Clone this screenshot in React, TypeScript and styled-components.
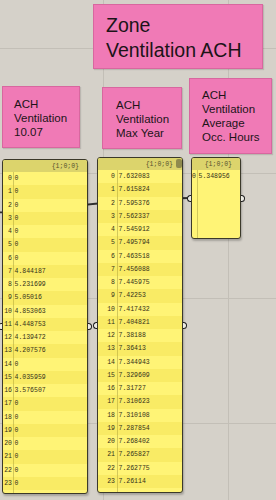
import React from "react";
import styled, { createGlobalStyle } from "styled-components";

const Global = createGlobalStyle`
  html, body { margin: 0; padding: 0; background: #d5d1c9; }
  body { width: 276px; height: 500px; overflow: hidden; }
`;

const ROW_H = 13.26;

const Canvas = styled.div`
  position: relative;
  width: 276px;
  height: 500px;
  overflow: hidden;
  background-color: #d5d1c9;
  background-image: linear-gradient(to right, #c3bfb7 1px, transparent 1px),
    linear-gradient(to bottom, #c3bfb7 1px, transparent 1px);
  background-size: 125px 125px;
  background-position: 103px 48px;
  font-family: "Liberation Sans", Arial, sans-serif;
`;

const Wires = styled.svg`
  position: absolute;
  inset: 0;
  width: 276px;
  height: 500px;
  z-index: 0;
`;

const Scribble = styled.div<{ $x: number; $y: number; $w: number; $h: number; $pt: number; $pl: number; $size: number; $lh: number }>`
  position: absolute;
  z-index: 1;
  left: ${(p) => p.$x}px;
  top: ${(p) => p.$y}px;
  width: ${(p) => p.$w}px;
  height: ${(p) => p.$h}px;
  box-sizing: border-box;
  padding: ${(p) => p.$pt}px 4px 0 ${(p) => p.$pl}px;
  background: #f07ab6;
  border: 1px solid #d8679f;
  box-shadow: 1px 1px 1px rgba(0, 0, 0, 0.12);
  color: #1c1418;
  font-size: ${(p) => p.$size}px;
  line-height: ${(p) => p.$lh}px;
  white-space: pre-line;
`;

const Panel = styled.div<{ $x: number; $y: number; $w: number; $h: number }>`
  position: absolute;
  z-index: 1;
  left: ${(p) => p.$x}px;
  top: ${(p) => p.$y}px;
  width: ${(p) => p.$w}px;
  height: ${(p) => p.$h}px;
  box-sizing: border-box;
  display: flex;
  flex-direction: column;
  border: 1px solid #3b392a;
  border-radius: 3px;
  background: #fff476;
  box-shadow: 1px 2px 2px rgba(0, 0, 0, 0.22);
  font-family: "Liberation Mono", "DejaVu Sans Mono", monospace;
  font-size: 6.5px;
  color: #35311a;
`;

const Header = styled.div<{ $pr: number }>`
  position: relative;
  height: 12px;
  flex: none;
  display: flex;
  align-items: center;
  justify-content: flex-end;
  padding-right: ${(p) => p.$pr}px;
  background: #dcd46c;
  border-radius: 2px 2px 0 0;
  color: #57522e;
`;

const Thumb = styled.span`
  position: absolute;
  right: 0px;
  top: 1px;
  width: 6px;
  height: 9px;
  border-radius: 2px;
  background: #8f8a4e;
`;

const Body = styled.div<{ $iw: number }>`
  flex: 1;
  display: flex;
  flex-direction: column;
  background-image: linear-gradient(
    to right,
    transparent ${(p) => p.$iw}px,
    #d2c85a ${(p) => p.$iw}px,
    #d2c85a ${(p) => p.$iw + 1}px,
    transparent ${(p) => p.$iw + 1}px
  );
  border-radius: 0 0 2px 2px;
`;

const Row = styled.div<{ $odd: boolean }>`
  display: flex;
  height: ${ROW_H}px;
  align-items: center;
  background: ${(p) => (p.$odd ? "rgba(215, 195, 10, 0.16)" : "transparent")};
`;

const Index = styled.span<{ $iw: number; $pr: number }>`
  width: ${(p) => p.$iw}px;
  flex: none;
  box-sizing: border-box;
  padding-right: ${(p) => p.$pr}px;
  text-align: right;
  white-space: nowrap;
`;

const Value = styled.span`
  padding-left: 1.5px;
  white-space: nowrap;
`;

const Grip = styled.span<{ $side: "left" | "right" }>`
  position: absolute;
  top: 50%;
  margin-top: -3.5px;
  width: 3px;
  height: 5px;
  background: #ecebe4;
  border: 1.5px solid #1e1e1e;
  ${(p) =>
    p.$side === "left"
      ? "left: -5px; border-right: none; border-radius: 4px 0 0 4px;"
      : "right: -5px; border-left: none; border-radius: 0 4px 4px 0;"}
`;

type DataPanelProps = {
  x: number;
  y: number;
  w: number;
  h: number;
  iw: number;
  ipr: number;
  hpr: number;
  thumb?: boolean;
  values: (string | number)[];
};

function DataPanel({ x, y, w, h, iw, ipr, hpr, thumb, values }: DataPanelProps) {
  return (
    <Panel $x={x} $y={y} $w={w} $h={h}>
      <Header $pr={hpr}>
        {"{1;0;0}"}
        {thumb && <Thumb />}
      </Header>
      <Body $iw={iw}>
        {values.map((v, i) => (
          <Row key={i} $odd={i % 2 === 1}>
            <Index $iw={iw} $pr={ipr}>
              {i}
            </Index>
            <Value>{v}</Value>
          </Row>
        ))}
      </Body>
      <Grip $side="left" />
      <Grip $side="right" />
    </Panel>
  );
}

const valuesA = [
  0, 0, 0, 0, 0, 0, 0, "4.844187", "5.231699", "5.05016", "4.853063", "4.448753",
  "4.139472", "4.207576", 0, "4.035959", "3.576507", 0, 0, 0, 0, 0, 0, 0,
];

const valuesB = [
  "7.632083", "7.615824", "7.595376", "7.562337", "7.545912", "7.495794",
  "7.463518", "7.456088", "7.445975", "7.42253", "7.417432", "7.404821",
  "7.38188", "7.36413", "7.344943", "7.329609", "7.31727", "7.310623",
  "7.310108", "7.287854", "7.268402", "7.265827", "7.262775", "7.26114",
];

export default function App() {
  return (
    <>
      <Global />
      <Canvas>
        <Wires viewBox="0 0 276 500">
          <path
            d="M -80 216 C 40 214, 110 198, 190 198"
            fill="none"
            stroke="#2f2f2f"
            strokeWidth="1.8"
          />
        </Wires>

        <Scribble $x={93} $y={4} $w={170} $h={65} $pt={8} $pl={12} $size={19.5} $lh={25}>
          {"Zone\nVentilation ACH"}
        </Scribble>
        <Scribble $x={2} $y={86} $w={78} $h={62} $pt={10} $pl={11} $size={11.5} $lh={14}>
          {"ACH\nVentilation\n10.07"}
        </Scribble>
        <Scribble $x={102} $y={87} $w={80} $h={62} $pt={10} $pl={13} $size={11.5} $lh={14}>
          {"ACH\nVentilation\nMax Year"}
        </Scribble>
        <Scribble $x={189} $y={78} $w={83} $h={76} $pt={9} $pl={12} $size={11.5} $lh={14}>
          {"ACH\nVentilation\nAverage\nOcc. Hours"}
        </Scribble>

        <DataPanel x={2} y={159} w={86} h={335} iw={10} ipr={1} hpr={8} values={valuesA} />
        <DataPanel x={97} y={157} w={86} h={336} iw={19} ipr={2} hpr={9} thumb values={valuesB} />
        <DataPanel x={191} y={157} w={50} h={82} iw={5} ipr={1} hpr={8} values={["5.348956"]} />
      </Canvas>
    </>
  );
}
